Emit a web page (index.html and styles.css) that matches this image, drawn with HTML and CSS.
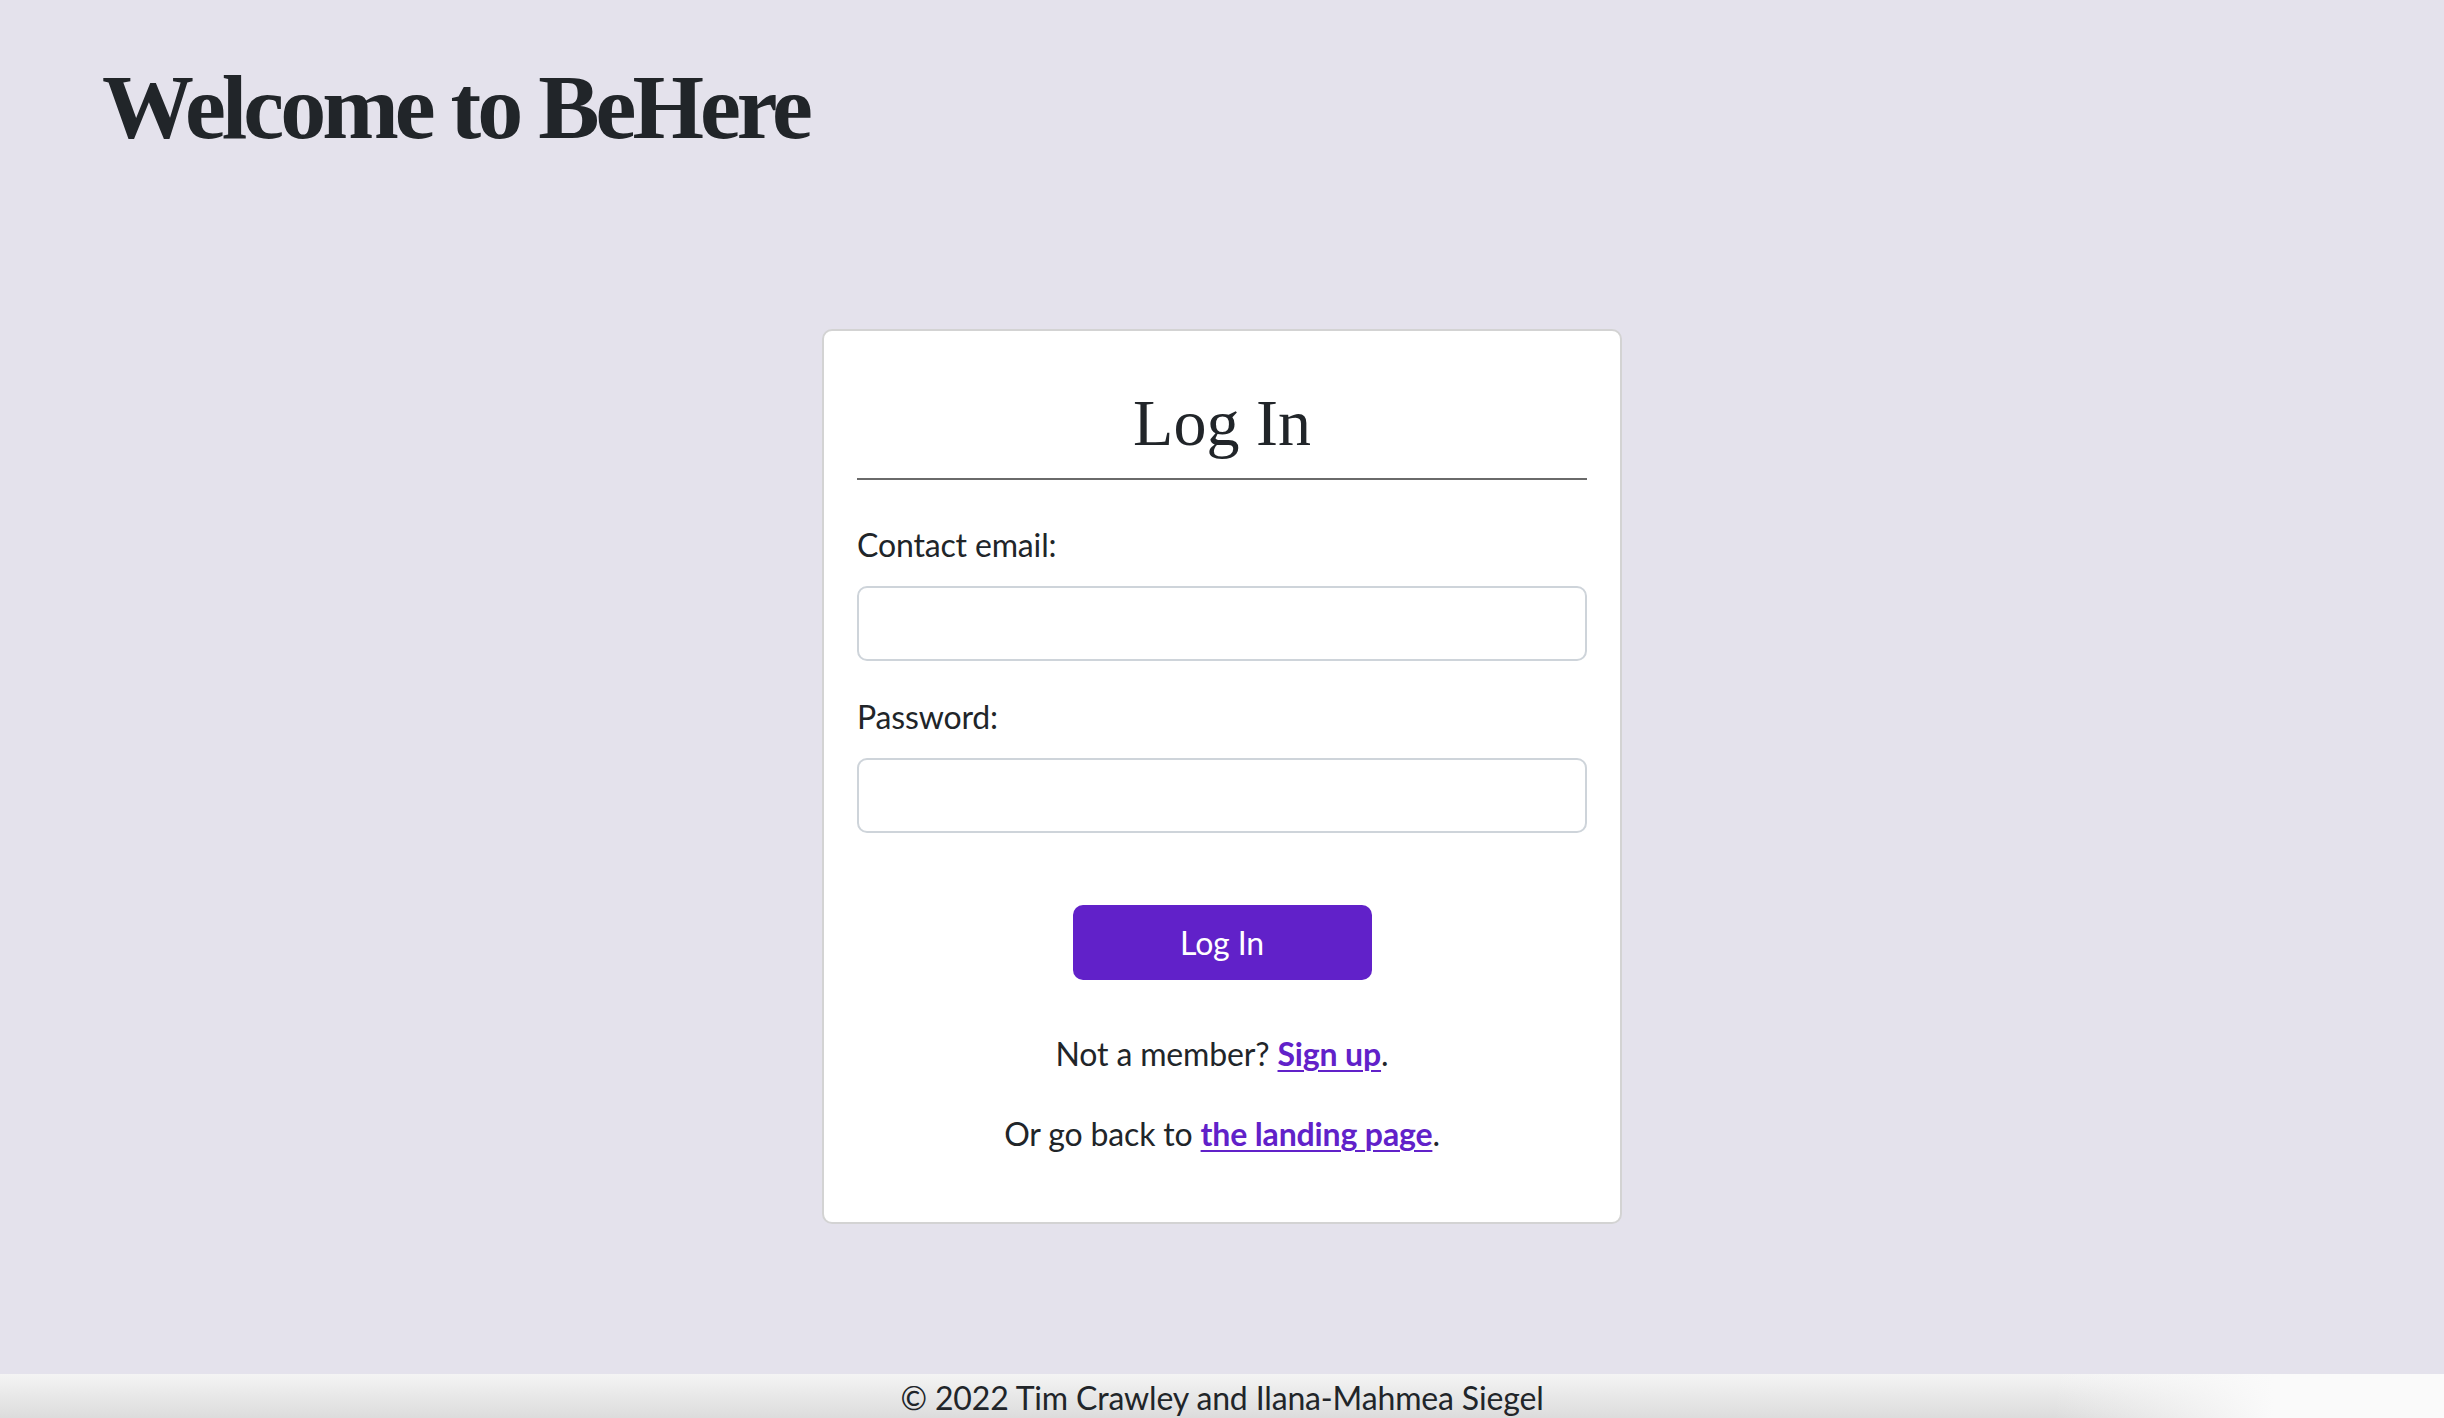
FILE: index.html
```html
<!DOCTYPE html>
<html lang="en">
<head>
<meta charset="utf-8">
<title>BeHere - Log In</title>
<link rel="stylesheet" href="styles.css">
</head>
<body class="page">
  <main class="main">
    <header class="site-header">
      <h1 class="site-title">Welcome to BeHere</h1>
    </header>
    <section class="login-card">
      <h2 class="card-title">Log In</h2>
      <hr class="card-rule">
      <form class="login-form">
        <label class="field-label" for="email">Contact email:</label>
        <input class="field-input" id="email" type="email">
        <label class="field-label" for="password">Password:</label>
        <input class="field-input" id="password" type="password">
        <button class="btn-primary" type="button">Log In</button>
      </form>
      <div class="card-links">
        <p class="card-note">Not a member? <a class="card-link" href="#">Sign up</a>.</p>
        <p class="card-note">Or go back to <a class="card-link" href="#">the landing page</a>.</p>
      </div>
    </section>
  </main>
  <footer class="site-footer">© 2022 Tim Crawley and Ilana-Mahmea Siegel</footer>
</body>
</html>
```
FILE: styles.css
```css
html, body {
  margin: 0;
  padding: 0;
}

.page {
  height: 100vh;
  overflow: hidden;
  display: flex;
  flex-direction: column;
  background: #e4e2ec;
  color: #212529;
  font-family: Lato, "Open Sans", sans-serif;
  font-size: 32px;
  line-height: 48px;
  letter-spacing: -0.15px;
}

.main {
  flex: 1;
  display: flex;
  flex-direction: column;
  align-items: center;
}

.site-header {
  align-self: stretch;
  padding: 52px 0 0 102px;
}

.site-title {
  margin: 0;
  font-family: "Liberation Serif", "Times New Roman", serif;
  font-weight: 700;
  font-size: 92px;
  line-height: 1.2;
  letter-spacing: -4px;
}

.login-card {
  margin-top: 167px;
  width: 800px;
  box-sizing: border-box;
  background: #ffffff;
  border: 2px solid #d3d3d3;
  border-radius: 10px;
  padding: 54px 33px 32px;
}

.card-title {
  margin: 0;
  text-align: center;
  font-family: "Liberation Serif", "Times New Roman", serif;
  font-weight: 400;
  font-size: 66px;
  line-height: 76.8px;
  letter-spacing: 0;
}

.card-rule {
  margin: 16px 0 0;
  border: 0;
  border-top: 2px solid #6a6a6a;
}

.login-form {
  display: flex;
  flex-direction: column;
  margin-top: 41px;
}

.field-label {
  margin-bottom: 17px;
}

.field-input {
  height: 75px;
  box-sizing: border-box;
  border: 2px solid #ced4da;
  border-radius: 10px;
  background: #fff;
  margin-bottom: 32px;
  font: inherit;
  padding: 0 24px;
}

.field-input:last-of-type {
  margin-bottom: 0;
}

.btn-primary {
  align-self: center;
  margin-top: 72px;
  width: 299px;
  height: 75px;
  border: 0;
  border-radius: 10px;
  background: #6121c9;
  color: #ffffff;
  font-family: Lato, "Open Sans", sans-serif;
  font-size: 32px;
  line-height: 48px;
  letter-spacing: -0.15px;
}

.card-links {
  margin-top: 50px;
}

.card-note {
  margin: 0 0 32px;
  text-align: center;
}

.card-link {
  color: #6121c9;
  font-weight: 700;
  text-decoration: underline;
  text-decoration-thickness: 2px;
  text-underline-offset: 4px;
}

.site-footer {
  flex-shrink: 0;
  height: 44px;
  overflow: hidden;
  text-align: center;
  background:
    linear-gradient(to right, rgba(250, 250, 250, 0) 84%, #fafafa 93%),
    linear-gradient(to bottom, #f4f4f4, #dcdcdc);
}
```
